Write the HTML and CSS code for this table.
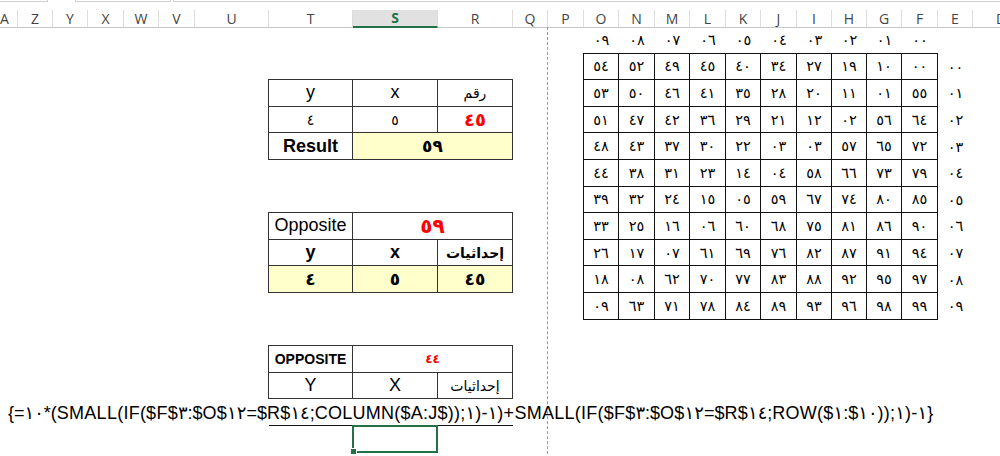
FILE: index.html
```html
<!DOCTYPE html>
<html lang="en">
<head>
<meta charset="utf-8">
<title>Sheet</title>
<link rel="stylesheet" href="styles.css">
</head>
<body>
<div class="sheet">
  <div class="topstrip"><span class="tb tb1"></span><span class="tb tb2"></span><span class="tb tb3"></span></div>

  <div class="colhead">
    <div class="hc hA">A</div><div class="hc">Z</div><div class="hc">Y</div><div class="hc">X</div><div class="hc">W</div><div class="hc">V</div><div class="hc">U</div><div class="hc">T</div><div class="hc hsel">S</div><div class="hc">R</div><div class="hc">Q</div><div class="hc">P</div><div class="hc">O</div><div class="hc">N</div><div class="hc">M</div><div class="hc">L</div><div class="hc">K</div><div class="hc">J</div><div class="hc">I</div><div class="hc">H</div><div class="hc">G</div><div class="hc">F</div><div class="hc">E</div><div class="hc hD">D</div>
  </div>

  <div class="pagebreak"></div>

  <div class="collabels ar">
    <div>٠٩</div><div>٠٨</div><div>٠٧</div><div>٠٦</div><div>٠٥</div><div>٠٤</div><div>٠٣</div><div>٠٢</div><div>٠١</div><div>٠٠</div>
  </div>

  <div class="numgrid ar">
    <div>٥٤</div><div>٥٢</div><div>٤٩</div><div>٤٥</div><div>٤٠</div><div>٣٤</div><div>٢٧</div><div>١٩</div><div>١٠</div><div>٠٠</div>
    <div>٥٣</div><div>٥٠</div><div>٤٦</div><div>٤١</div><div>٣٥</div><div>٢٨</div><div>٢٠</div><div>١١</div><div>٠١</div><div>٥٥</div>
    <div>٥١</div><div>٤٧</div><div>٤٢</div><div>٣٦</div><div>٢٩</div><div>٢١</div><div>١٢</div><div>٠٢</div><div>٥٦</div><div>٦٤</div>
    <div>٤٨</div><div>٤٣</div><div>٣٧</div><div>٣٠</div><div>٢٢</div><div>٠٣</div><div>٠٣</div><div>٥٧</div><div>٦٥</div><div>٧٢</div>
    <div>٤٤</div><div>٣٨</div><div>٣١</div><div>٢٣</div><div>١٤</div><div>٠٤</div><div>٥٨</div><div>٦٦</div><div>٧٣</div><div>٧٩</div>
    <div>٣٩</div><div>٣٢</div><div>٢٤</div><div>١٥</div><div>٠٥</div><div>٥٩</div><div>٦٧</div><div>٧٤</div><div>٨٠</div><div>٨٥</div>
    <div>٣٣</div><div>٢٥</div><div>١٦</div><div>٠٦</div><div>٦٠</div><div>٦٨</div><div>٧٥</div><div>٨١</div><div>٨٦</div><div>٩٠</div>
    <div>٢٦</div><div>١٧</div><div>٠٧</div><div>٦١</div><div>٦٩</div><div>٧٦</div><div>٨٢</div><div>٨٧</div><div>٩١</div><div>٩٤</div>
    <div>١٨</div><div>٠٨</div><div>٦٢</div><div>٧٠</div><div>٧٧</div><div>٨٣</div><div>٨٨</div><div>٩٢</div><div>٩٥</div><div>٩٧</div>
    <div>٠٩</div><div>٦٣</div><div>٧١</div><div>٧٨</div><div>٨٤</div><div>٨٩</div><div>٩٣</div><div>٩٦</div><div>٩٨</div><div>٩٩</div>
  </div>

  <div class="rowlabels ar">
    <div>٠٠</div><div>٠١</div><div>٠٢</div><div>٠٣</div><div>٠٤</div><div>٠٥</div><div>٠٦</div><div>٠٧</div><div>٠٨</div><div>٠٩</div>
  </div>

  <div class="tbl t1">
    <div class="lat">y</div><div class="lat">x</div><div class="arw">رقم</div>
    <div class="dig">٤</div><div class="dig">٥</div><div class="red big">٤٥</div>
    <div class="lat b">Result</div><div class="span2 yel bigb">٥٩</div>
  </div>

  <div class="tbl t2">
    <div class="lat">Opposite</div><div class="span2 red huge">٥٩</div>
    <div class="lat b">y</div><div class="lat b">x</div><div class="arw b">إحداثيات</div>
    <div class="yel bigb">٤</div><div class="yel bigb">٥</div><div class="yel bigb">٤٥</div>
  </div>

  <div class="tbl t3">
    <div class="caps">OPPOSITE</div><div class="span2 red small">٤٤</div>
    <div class="lat">Y</div><div class="lat">X</div><div class="arw">إحداثيات</div>
  </div>

  <div class="fline"></div>
  <div class="formula"><span class="ftext">{=١٠*(SMALL(IF($F$٣:$O$١٢=$R$١٤;COLUMN($A:J$));١)-١)+SMALL(IF($F$٣:$O$١٢=$R$١٤;ROW($١:$١٠));١)-١}</span></div>

  <div class="sel"></div>
</div>
</body>
</html>
```

FILE: styles.css
```css
:root {
  --cols: 18px 35px 35px 36px 35px 36px 74px 84px 85px 75px 35px 36px 35px 36px 35px 36px 35px 36px 35px 35px 35px 36px 35px 27px;
  --gcols: 35px 36px 35px 36px 35px 36px 35px 35px 35px 36px;
  --green: #217346;
}

html, body {
  margin: 0;
  padding: 0;
  background: #fff;
  overflow: hidden;
}

body {
  width: 1000px;
  height: 456px;
  font-family: "Liberation Sans", "DejaVu Sans", sans-serif;
  color: #000;
}

.sheet {
  display: grid;
  grid-template-columns: var(--cols);
  grid-template-rows: 10px 17px repeat(17, 26.6px);
  width: 1000px;
  height: 456px;
  overflow: hidden;
}

/* top strip (bottom edges of the formula bar boxes) */
.topstrip {
  grid-column: 1 / -1;
  grid-row: 1;
  display: flex;
  align-items: flex-start;
}
.tb {
  display: block;
  height: 1px;
  border: 1px solid #d0d0d0;
  border-top: none;
}
.tb1 { width: 47px; margin-left: -1px; }
.tb2 { width: 94px; margin-left: 27px; }
.tb3 { flex: 1; margin-left: 2px; margin-right: -2px; }

/* column header */
.colhead {
  grid-column: 1 / -1;
  grid-row: 2;
  display: grid;
  grid-template-columns: var(--cols);
  font-family: "Open Sans", "Liberation Sans", sans-serif;
  font-size: 14px;
  color: #444;
}
.hc {
  border-right: 1px solid #dcdcdc;
  border-bottom: 1px solid #c8c8c8;
  display: flex;
  align-items: center;
  justify-content: center;
  line-height: 16px;
}
.hA { justify-content: flex-start; padding-left: 0; }
.hD { justify-content: flex-start; padding-left: 23px; border-right: none; }
.hsel {
  background: #e1e1e1;
  border-bottom: 2px solid var(--green);
  color: var(--green);
  font-weight: bold;
}

.pagebreak {
  grid-column: 12;
  grid-row: 3 / -1;
  border-left: 1px dashed #9a9a9a;
  margin-left: -1px;
}

/* arabic digits */
.ar {
  font-family: "DejaVu Sans", sans-serif;
  font-size: 14.5px;
  letter-spacing: 2px;
}

.collabels {
  grid-column: 13 / 23;
  grid-row: 3;
  display: grid;
  grid-template-columns: var(--gcols);
}
.collabels > div,
.rowlabels > div {
  display: flex;
  align-items: center;
  justify-content: center;
}

.numgrid {
  grid-column: 13 / 23;
  grid-row: 4 / 14;
  display: grid;
  grid-template-columns: var(--gcols);
  grid-template-rows: repeat(10, 1fr);
  border-left: 1px solid #111;
  border-top: 1px solid #111;
  margin: -1px 0 0 -1px;
}
.numgrid > div {
  border-right: 1px solid #111;
  border-bottom: 1px solid #111;
  display: flex;
  align-items: center;
  justify-content: center;
}

.rowlabels {
  grid-column: 23;
  grid-row: 4 / 14;
  display: grid;
  grid-template-rows: repeat(10, 1fr);
}

/* small tables */
.tbl {
  grid-column: 8 / 11;
  display: grid;
  grid-template-columns: 84px 85px 75px;
  grid-auto-rows: 1fr;
  border-left: 1px solid #333;
  border-top: 1px solid #333;
  margin: -1px 0 0 -1px;
}
.tbl > div {
  border-right: 1px solid #333;
  border-bottom: 1px solid #333;
  display: flex;
  align-items: center;
  justify-content: center;
  white-space: nowrap;
}
.t1 { grid-row: 5 / 8; }
.t2 { grid-row: 10 / 13; }
.t3 { grid-row: 15 / 17; }

.span2 { grid-column: span 2; }
.lat { font-size: 18px; }
.b { font-weight: bold; }
.caps { font-size: 14px; font-weight: bold; }
.arw { font-family: "DejaVu Sans", sans-serif; font-size: 14px; }
.dig { font-family: "DejaVu Sans", sans-serif; font-size: 14px; }
.yel { background: #ffffcc; }
.red { color: #ff0000; }
.big { font-family: "DejaVu Sans", sans-serif; font-size: 18px; font-weight: bold; letter-spacing: 3px; }
.bigb { font-family: "DejaVu Sans", sans-serif; font-size: 17px; font-weight: bold; letter-spacing: 4px; }
.huge { font-family: "DejaVu Sans", sans-serif; font-size: 20px; font-weight: bold; letter-spacing: 4px; }
.small { font-family: "DejaVu Sans", sans-serif; font-size: 12px; font-weight: bold; letter-spacing: 1px; }

/* formula line */
.fline {
  grid-column: 8 / 11;
  grid-row: 17;
  border-bottom: 1px solid #111;
}
.formula {
  grid-column: 1 / -1;
  grid-row: 17;
  display: flex;
  align-items: center;
  padding-left: 8px;
  font-size: 18px;
  letter-spacing: 0.25px;
  white-space: nowrap;
}
.ftext {
  direction: ltr;
  unicode-bidi: bidi-override;
}

.sel {
  grid-column: 9;
  grid-row: 18;
  border: 2px solid var(--green);
  margin: -1px 0 0 -1px;
  position: relative;
}
.sel::after {
  content: "";
  position: absolute;
  left: -4px;
  bottom: -4px;
  width: 5px;
  height: 5px;
  background: var(--green);
  border: 1px solid #fff;
}
```
